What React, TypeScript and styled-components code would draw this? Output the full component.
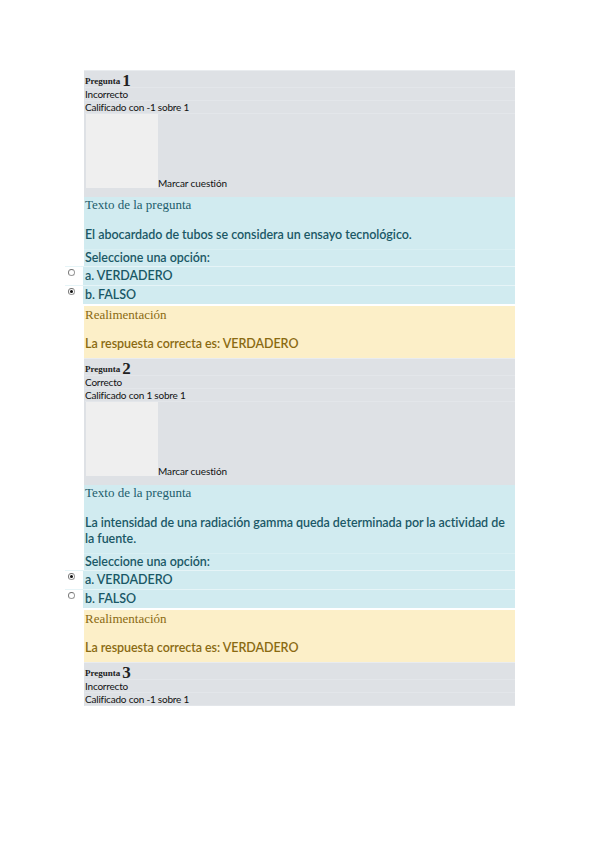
import React from "react";
import styled, { createGlobalStyle } from "styled-components";

const Global = createGlobalStyle`
  html, body { margin: 0; padding: 0; background: #fff; }
  body { font-family: "Lato", "Liberation Sans", sans-serif; }
  *, *::before, *::after { box-sizing: border-box; }
`;

const Page = styled.div`
  width: 599px;
  height: 848px;
  padding-top: 70px;
`;

const Sheet = styled.div`
  margin-left: 84px;
  width: 431px;
  display: flex;
  flex-direction: column;
`;

const Header = styled.div<{ $full?: boolean }>`
  background: #dee1e5;
  border-top: 1px solid #e9ecef;
  padding: 3px 0 ${(p) => (p.$full ? "9px" : "0")} 1px;
  display: flex;
  flex-direction: column;
`;

const HRow = styled.div<{ $h: number }>`
  height: ${(p) => p.$h}px;
  display: flex;
  align-items: center;
  border-bottom: 1px solid #e3e6ea;
  font-family: "Lato", "Liberation Sans", sans-serif;
  font-size: 10px;
  color: #111;
  letter-spacing: -0.2px;
`;

const QLabel = styled.span`
  font-family: "Liberation Serif", serif;
  font-weight: bold;
  font-size: 9px;
  color: #222;
  letter-spacing: 0;
`;

const QNum = styled.span`
  font-family: "Liberation Serif", serif;
  font-weight: bold;
  font-size: 17px;
  color: #222;
  margin-left: 2px;
  letter-spacing: 0;
  line-height: 14px;
`;

const FlagRow = styled.div`
  display: flex;
  align-items: flex-end;
`;

const FlagBox = styled.div`
  width: 72px;
  height: 74px;
  background: #efefef;
  margin-left: 1px;
`;

const FlagText = styled.span`
  font-family: "Lato", "Liberation Sans", sans-serif;
  font-size: 10px;
  color: #111;
  letter-spacing: -0.1px;
  line-height: 12px;
  margin-bottom: -1px;
`;

const Content = styled.div`
  background: #d1ebf0;
  display: flex;
  flex-direction: column;
`;

const Title = styled.div`
  font-family: "Liberation Serif", serif;
  font-size: 13px;
  color: #1c5d6c;
  padding-left: 1px;
  height: 16px;
  line-height: 16px;
`;

const Question = styled.div`
  font-family: "Lato", "Liberation Sans", sans-serif;
  font-size: 12.5px;
  font-weight: 600;
  color: #1a5866;
  padding: 14px 0 6px 1px;
  line-height: 16px;
  letter-spacing: -0.05px;
  border-bottom: 1px solid #d9eff3;
`;

const Prompt = styled.div`
  font-family: "Lato", "Liberation Sans", sans-serif;
  font-size: 12.5px;
  font-weight: 600;
  color: #1a5866;
  padding-left: 1px;
  line-height: 16px;
  letter-spacing: -0.05px;
`;

const Option = styled.div`
  display: flex;
  align-items: stretch;
  margin-left: -19px;
  background: #d1ebf0;
  height: 19px;
  border-top: 1px solid #e6f4f7;
`;

const RadioCell = styled.div`
  width: 18px;
  background: #ffffff;
  margin-right: 2px;
  position: relative;
  flex: none;
`;

const Radio = styled.span<{ $checked?: boolean }>`
  position: absolute;
  left: 3px;
  top: 2px;
  width: 7px;
  height: 7px;
  border-radius: 50%;
  border: 1px solid #9a9a9a;
  border-top-color: #6f6f6f;
  border-left-color: #7a7a7a;
  background: #fff;
  &::after {
    content: "";
    display: ${(p) => (p.$checked ? "block" : "none")};
    position: absolute;
    left: 1px;
    top: 1px;
    width: 3px;
    height: 3px;
    border-radius: 50%;
    background: #111;
  }
`;

const OptText = styled.span`
  font-family: "Lato", "Liberation Sans", sans-serif;
  font-size: 12.5px;
  font-weight: 600;
  color: #1a5866;
  line-height: 18px;
  letter-spacing: -0.05px;
`;

const Feedback = styled.div`
  background: #fcefc8;
  margin-top: 2px;
  height: 52px;
  display: flex;
  flex-direction: column;
  padding-left: 1px;
`;

const FbTitle = styled.div`
  font-family: "Liberation Serif", serif;
  font-size: 13px;
  color: #8a6a12;
  line-height: 16px;
  padding-top: 1px;
`;

const FbText = styled.div`
  font-family: "Lato", "Liberation Sans", sans-serif;
  font-size: 12.5px;
  font-weight: 600;
  color: #8a6a12;
  line-height: 16px;
  margin-top: 13px;
  letter-spacing: -0.05px;
`;

type Q = {
  n: number;
  state: string;
  grade: string;
  text?: string[];
  checked?: "a" | "b";
  full: boolean;
};

const questions: Q[] = [
  {
    n: 1,
    state: "Incorrecto",
    grade: "Calificado con -1 sobre 1",
    text: ["El abocardado de tubos se considera un ensayo tecnológico."],
    checked: "b",
    full: true,
  },
  {
    n: 2,
    state: "Correcto",
    grade: "Calificado con 1 sobre 1",
    text: [
      "La intensidad de una radiación gamma queda determinada por la actividad de",
      "la fuente.",
    ],
    checked: "a",
    full: true,
  },
  { n: 3, state: "Incorrecto", grade: "Calificado con -1 sobre 1", full: false },
];

export default function App() {
  return (
    <Page>
      <Global />
      <Sheet>
        {questions.map((q) => (
          <React.Fragment key={q.n}>
            <Header $full={q.full}>
              <HRow $h={14}>
                <QLabel>Pregunta</QLabel>
                <QNum>{q.n}</QNum>
              </HRow>
              <HRow $h={13}>{q.state}</HRow>
              <HRow $h={13}>{q.grade}</HRow>
              {q.full && (
                <FlagRow>
                  <FlagBox />
                  <FlagText>Marcar cuestión</FlagText>
                </FlagRow>
              )}
            </Header>
            {q.full && q.text && (
              <>
                <Content>
                  <Title>Texto de la pregunta</Title>
                  <Question>
                    {q.text.map((t, i) => (
                      <div key={i}>{t}</div>
                    ))}
                  </Question>
                  <Prompt>Seleccione una opción:</Prompt>
                  <Option>
                    <RadioCell>
                      <Radio $checked={q.checked === "a"} />
                    </RadioCell>
                    <OptText>a. VERDADERO</OptText>
                  </Option>
                  <Option>
                    <RadioCell>
                      <Radio $checked={q.checked === "b"} />
                    </RadioCell>
                    <OptText>b. FALSO</OptText>
                  </Option>
                </Content>
                <Feedback>
                  <FbTitle>Realimentación</FbTitle>
                  <FbText>La respuesta correcta es: VERDADERO</FbText>
                </Feedback>
              </>
            )}
          </React.Fragment>
        ))}
      </Sheet>
    </Page>
  );
}
